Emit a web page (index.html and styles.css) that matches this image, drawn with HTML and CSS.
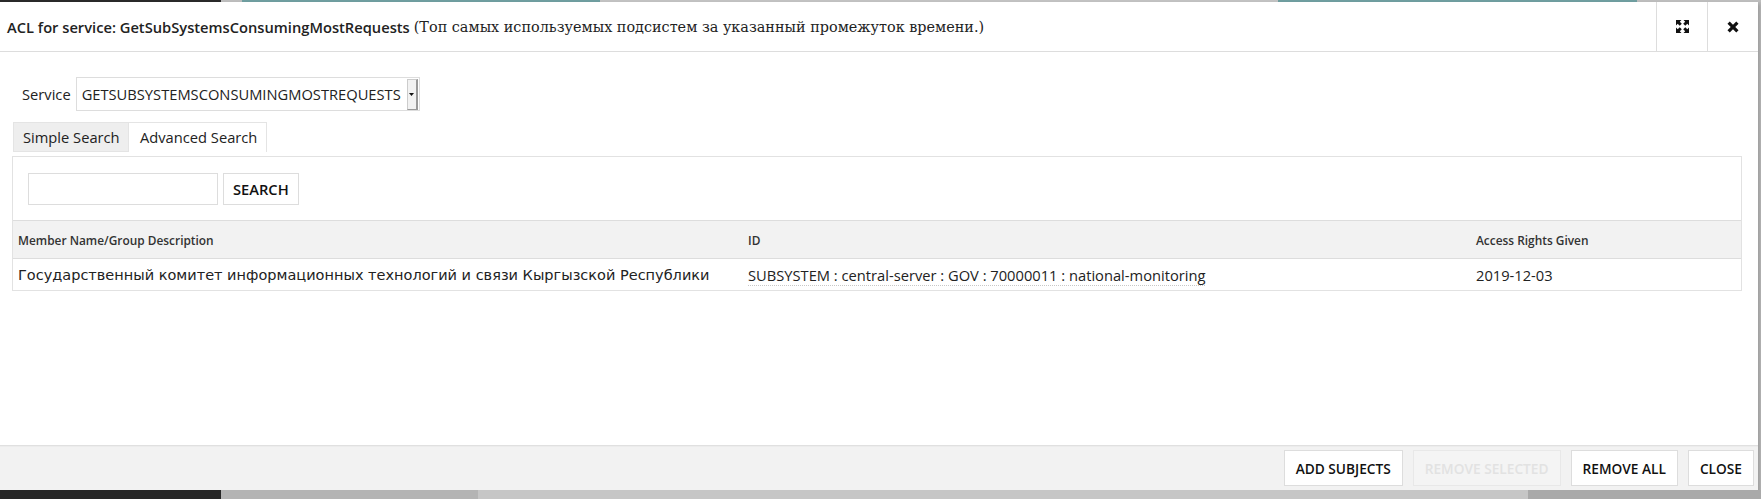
FILE: index.html
```html
<!DOCTYPE html>
<html lang="en">
<head>
    <meta charset="UTF-8">
    <title>ACL for service</title>
    <link rel="stylesheet" href="styles.css">
</head>
<body>

    <!-- page behind the dialog -->
    <div class="backdrop-top"></div>

    <div class="dialog">
        <!-- Title bar -->
        <div class="dialog-header">
            <div class="dialog-title">
                ACL for service: GetSubSystemsConsumingMostRequests <span class="title-note">(Топ самых используемых подсистем за указанный промежуток времени.)</span>
            </div>
            <button class="header-btn" title="Maximize">
                <svg width="13" height="13" viewBox="0 0 13 13">
                    <path d="M0 0h5.5L3.8 1.7 5.8 3.7 3.7 5.8 1.7 3.8 0 5.5z M13 0v5.5l-1.7-1.7-2 2-2.1-2.1 2-2L7.5 0z M0 13V7.5l1.7 1.7 2-2 2.1 2.1-2 2L5.5 13z M13 13H7.5l1.7-1.7-2-2 2.1-2.1 2 2L13 7.5z" fill="#111"/>
                </svg>
            </button>
            <button class="header-btn" title="Close">
                <svg width="12" height="12" viewBox="0 0 12 12">
                    <path d="M1.6 1.6l8.8 8.8M10.4 1.6l-8.8 8.8" stroke="#111" stroke-width="3.2"/>
                </svg>
            </button>
        </div>

        <!-- Body -->
        <div class="dialog-body">
            <div class="service-row">
                <label>Service</label>
                <div class="select">
                    <span class="select-value">GETSUBSYSTEMSCONSUMINGMOSTREQUESTS</span>
                    <span class="select-arrow">
                        <svg width="5" height="3" viewBox="0 0 5 3"><path d="M0 0h5L2.5 3z" fill="#111"/></svg>
                    </span>
                </div>
            </div>

            <div class="tabs">
                <a href="#" class="tab tab-simple">Simple Search</a>
                <a href="#" class="tab tab-advanced">Advanced Search</a>
            </div>

            <div class="panel">
                <div class="search-row">
                    <input type="text" class="search-input">
                    <button class="btn">SEARCH</button>
                </div>

                <table class="acl-table">
                    <thead>
                        <tr>
                            <th class="col-name">Member Name/Group Description</th>
                            <th class="col-id">ID</th>
                            <th class="col-date">Access Rights Given</th>
                        </tr>
                    </thead>
                    <tbody>
                        <tr>
                            <td class="member-name">Государственный комитет информационных технологий и связи Кыргызской Республики</td>
                            <td><span class="subject-id">SUBSYSTEM : central-server : GOV : 70000011 : national-monitoring</span></td>
                            <td>2019-12-03</td>
                        </tr>
                    </tbody>
                </table>
            </div>
        </div>

        <!-- Footer buttons -->
        <div class="dialog-footer">
            <button class="btn">ADD SUBJECTS</button>
            <button class="btn" disabled>REMOVE SELECTED</button>
            <button class="btn">REMOVE ALL</button>
            <button class="btn">CLOSE</button>
        </div>
    </div>

    <div class="backdrop-bottom"></div>

</body>
</html>
```

FILE: styles.css
```css
/* Base */
body {
    margin: 0;
    width: 1761px;
    height: 499px;
    overflow: hidden;
    background-color: #b9b9b9;
    font-family: "Open Sans", Arial, sans-serif;
    font-size: 14.7px;
    color: #222;
}

/* bits of the page under the modal */
.backdrop-top {
    height: 2px;
    background: linear-gradient(to right, #2a2a2a 0 221px, #bdbdbd 221px 242px, #6f9ea0 242px 600px, #c2c2c2 600px 1278px, #6f9ea0 1278px 1637px, #bdbdbd 1637px);
}

.backdrop-bottom {
    height: 10px;
    background: linear-gradient(to right, #262626 0 221px, #b4b4b4 221px 478px, #c6c6c6 478px 1528px, #a9a9a9 1528px);
}

/* Dialog */
.dialog {
    width: 1758px;
    height: 488px;
    background-color: #fff;
    display: flex;
    flex-direction: column;
    box-shadow: 2px 2px 3px rgba(0, 0, 0, 0.15);
}

.dialog-header {
    height: 49px;
    border-bottom: 1px solid #ddd;
    display: flex;
    align-items: stretch;
    flex-shrink: 0;
}

.dialog-title {
    flex: 1;
    padding-left: 7px;
    display: flex;
    align-items: center;
    gap: 4px;
    font-size: 14.7px;
    font-weight: 600;
    color: #222;
    white-space: nowrap;
}

.title-note {
    font-family: "DejaVu Serif", "Liberation Serif", serif;
    font-weight: normal;
    font-size: 14.4px;
    color: #222;
}

.header-btn {
    width: 51px;
    border: none;
    border-left: 1px solid #ddd;
    background: #fff;
    display: flex;
    align-items: center;
    justify-content: center;
    padding: 0;
    cursor: pointer;
}

/* Body */
.dialog-body {
    flex: 1;
    padding: 25px 16px 0 12px;
}

.service-row {
    display: flex;
    align-items: center;
    gap: 5px;
    padding-left: 10px;
}

.select {
    width: 344px;
    height: 34px;
    border: 1px solid #ddd;
    display: flex;
    align-items: center;
    justify-content: space-between;
    box-sizing: border-box;
    padding-left: 5px;
}

.select-value {
    color: #222;
}

.select-arrow {
    width: 8px;
    height: 29px;
    margin-right: 1px;
    border: 1px solid #ccc;
    border-right: 2px solid #999;
    border-bottom-color: #999;
    background: #f2f2f2;
    display: flex;
    align-items: center;
    justify-content: center;
}

/* Tabs */
.tabs {
    display: flex;
    margin-top: 11px;
    margin-left: 1px;
}

.tab {
    height: 30px;
    line-height: 29px;
    box-sizing: border-box;
    padding: 0 9px;
    color: #222;
    text-decoration: none;
    border: 1px solid #e4e4e4;
    white-space: nowrap;
}

.tab-simple {
    background-color: #eee;
    width: 116px;
}

.tab-advanced {
    background-color: #fff;
    border-left: none;
    border-bottom: none;
    padding-left: 11px;
    width: 138px;
}

.panel {
    margin-top: 4px;
    border: 1px solid #e2e2e2;
}

.search-row {
    display: flex;
    gap: 5px;
    padding: 16px 15px 15px;
}

.search-input {
    width: 190px;
    height: 32px;
    box-sizing: border-box;
    border: 1px solid #ddd;
    margin: 0;
}

/* Table */
.acl-table {
    width: 100%;
    border-collapse: collapse;
}

.acl-table th {
    background-color: #f2f2f2;
    height: 37px;
    padding: 0 5px;
    text-align: left;
    font-size: 11.9px;
    font-weight: 600;
    color: #333;
    border-top: 1px solid #ddd;
    border-bottom: 1px solid #ddd;
}

.acl-table td {
    height: 31px;
    padding: 0 5px;
    color: #222;
}

.acl-table td.member-name {
    font-family: "DejaVu Sans", "Open Sans", sans-serif;
    font-size: 14.5px;
}

.col-name {
    width: 720px;
}

.col-id {
    width: 718px;
}

.subject-id {
    border-bottom: 1px dotted #c8c8c8;
}

/* Buttons */
.btn {
    height: 36px;
    padding: 0 11px;
    background-color: #fff;
    border: 1px solid #ddd;
    font-family: "Open Sans", Arial, sans-serif;
    font-size: 13.7px;
    font-weight: 600;
    color: #111;
    cursor: pointer;
}

.btn:disabled {
    background-color: #f4f4f4;
    color: #e2e2e2;
    border-color: #e8e8e8;
    cursor: default;
}

.search-row .btn {
    height: 32px;
    padding: 0 9px;
    font-size: 14.7px;
}

/* Footer */
.dialog-footer {
    height: 44px;
    flex-shrink: 0;
    background-color: #f2f2f2;
    border-top: 1px solid #e0e0e0;
    box-shadow: inset 0 1px 0 #ececec;
    display: flex;
    justify-content: flex-end;
    align-items: center;
    gap: 10px;
    padding-right: 4px;
}
```
